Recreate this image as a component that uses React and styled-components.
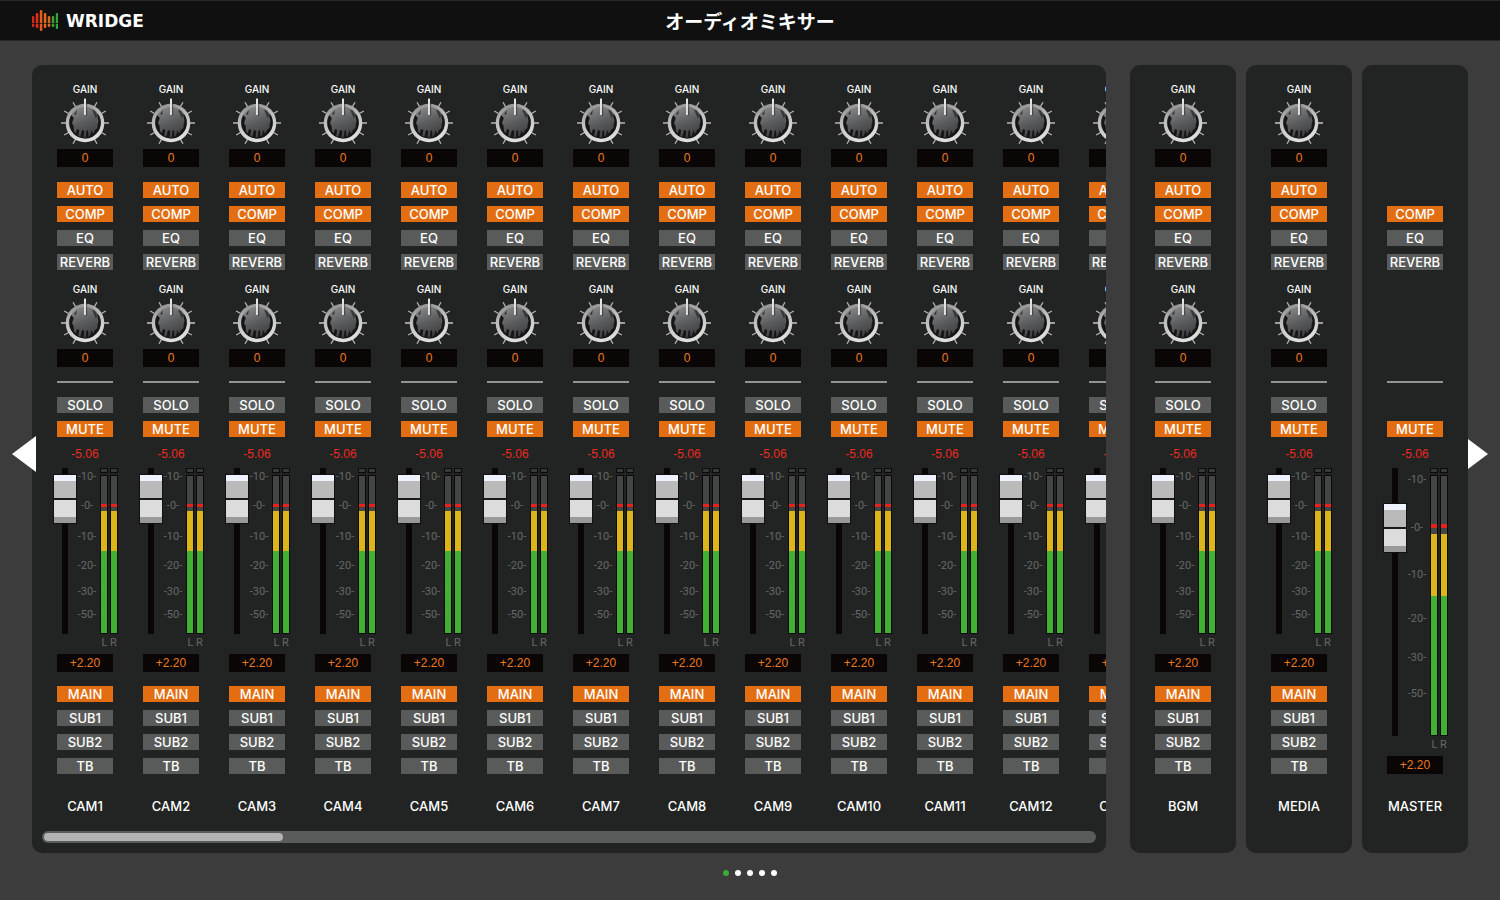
import React, { useState } from "react";
import styled, { createGlobalStyle } from "styled-components";

const GlobalStyle = createGlobalStyle`
  * {
    box-sizing: border-box;
  }
  body {
    margin: 0;
    background-color: #3b3c3b;
    color: #fff;
    font-family: Inter, "Liberation Sans", "Noto Sans CJK JP", sans-serif;
  }
`;

const Page = styled.div`
  min-height: 100vh;
  display: flex;
  flex-direction: column;
`;

const Header = styled.header`
  display: grid;
  grid-template-columns: 1fr auto 1fr;
  align-items: center;
  height: 41px;
  padding: 0 32px;
  background-color: #101010;
  border-top: 1px solid #262727;
  border-bottom: 1px solid #262727;
`;

const Logo = styled.a`
  display: flex;
  align-items: center;
  gap: 8px;
  color: #fff;
  font-family: "DejaVu Sans", sans-serif;
  font-size: 17px;
  font-weight: 700;
  line-height: 20px;
  text-decoration: none;
`;

const Title = styled.h1`
  margin: 0;
  font-family: "Noto Sans CJK JP", sans-serif;
  font-size: 19px;
  font-weight: 700;
  line-height: 24px;
`;

const Main = styled.main`
  display: flex;
  padding-top: 24px;
`;

const ArrowColumn = styled.div`
  position: relative;
  z-index: 1;
  flex: 0 0 32px;
  min-width: 0;
  display: flex;
  align-items: center;
  padding-bottom: 10px;
  padding-left: ${({ $side }) => ($side === "left" ? "12px" : "0")};
`;

const ArrowButton = styled.button`
  flex: none;
  display: block;
  padding: 0;
  border: none;
  background: none;
  cursor: pointer;

  svg {
    display: block;
  }
`;

const ScrollPanel = styled.section`
  flex: 1;
  min-width: 0;
  padding: 16px 0 10px 10px;
  border-radius: 10px;
  background-color: #222423;
  overflow: hidden;
`;

const Strips = styled.div`
  display: flex;
`;

const ScrollTrack = styled.div`
  height: 12px;
  margin: 17px 10px 0 0;
  padding: 2px;
  border-radius: 6px;
  background-color: #5a5b5b;
`;

const ScrollThumb = styled.div`
  height: 8px;
  border-radius: 4px;
  background-color: #b3b3b3;
`;

const FixedPanels = styled.div`
  display: flex;
  gap: 10px;
  margin-left: 24px;
`;

const Panel = styled.section`
  display: flex;
  padding: 16px 10px 39px;
  border-radius: 10px;
  background-color: #222423;
`;

const StripColumn = styled.div`
  flex: 0 0 86px;
  display: flex;
  flex-direction: column;
  align-items: center;
`;

const GainSlot = styled.div`
  display: flex;
  flex-direction: column;
  align-items: center;
  height: 86px;
  margin-top: ${({ $top }) => $top || 0}px;
`;

const GainLabel = styled.span`
  font-size: 10px;
  font-weight: 500;
  line-height: 16px;
`;

const Dial = styled.label`
  position: relative;
  display: block;
  width: 52px;
  height: 52px;

  svg {
    display: block;
  }
`;

const DialInput = styled.input`
  position: absolute;
  inset: 0;
  width: 100%;
  height: 100%;
  margin: 0;
  opacity: 0;
  cursor: pointer;
`;

const Value = styled.output`
  flex: none;
  width: 56px;
  height: 18px;
  background-color: #0a0606;
  color: #f07a1e;
  font-family: "Liberation Sans", sans-serif;
  font-size: 12px;
  line-height: 18px;
  text-align: center;
`;

const ButtonGroup = styled.div`
  display: flex;
  flex-direction: column;
  justify-content: flex-end;
  gap: 8px;
  min-height: ${({ $rows }) => $rows * 24 - 8}px;
  margin-top: ${({ $top }) => $top}px;
`;

const Toggle = styled.button`
  display: block;
  width: 56px;
  height: 16px;
  padding: 0;
  border: none;
  background-color: ${({ $on }) => ($on ? "#e36e12" : "#595b5a")};
  color: #fff;
  font-family: inherit;
  font-size: 13px;
  font-weight: 500;
  line-height: 16px;
  text-align: center;
  cursor: pointer;
`;

const Hr = styled.hr`
  width: 56px;
  height: 2px;
  margin: 14px 0 0;
  border: none;
  background-color: #929392;
`;

const Peak = styled.span`
  margin: 9px 0 6px;
  color: #ee2a20;
  font-family: "Liberation Sans", sans-serif;
  font-size: 12px;
  line-height: 16px;
`;

const FaderRow = styled.div`
  display: flex;
  width: 86px;
  height: ${({ $tall }) => ($tall ? 268 : 166)}px;
  padding: 0 10px 0 11px;
`;

const Fader = styled.input`
  appearance: none;
  writing-mode: vertical-lr;
  direction: rtl;
  width: 24px;
  height: 100%;
  margin: 0;
  background: linear-gradient(#0a0606, #0a0606) center / 6px 100% no-repeat;
  cursor: pointer;

  &::-webkit-slider-thumb {
    appearance: none;
    width: 24px;
    height: 50px;
    border: 1px solid #111;
    background: linear-gradient(
      #edf2fd 0 6px,
      #bababa 6px 23px,
      #191919 23px 25px,
      #dcdcdc 25px 42px,
      #999 42px
    );
  }
`;

const Scale = styled.div`
  display: grid;
  grid-template-rows: ${({ $tall }) =>
    $tall ? "48px 47px 44px 39px 36px 12px" : "29px 31px 29px 26px 23px 12px"};
  width: 20px;
  padding-top: ${({ $tall }) => ($tall ? 6 : 3)}px;
  color: #666867;
  font-family: Roboto, sans-serif;
  font-size: 11px;
  line-height: 12px;
  text-align: center;
`;

const Meters = styled.div`
  display: flex;
  gap: 2px;
  margin-left: 3px;
`;

const Meter = styled.div`
  display: flex;
  flex-direction: column;
  gap: 2px;
  width: 8px;
`;

const ClipLamp = styled.div`
  height: 5px;
  border: 1px solid #0a0a0a;
  background-color: #373838;
`;

const MeterBar = styled.div`
  flex: 1;
  border: 1px solid #0a0a0a;
  background: ${({ $tall }) =>
    $tall
      ? "linear-gradient(#444545 0 48px, #e8211b 48px 52px, #444545 52px 58px, #dbb51a 58px 120px, #42b034 120px)"
      : "linear-gradient(#444545 0 28px, #e8211b 28px 31px, #444545 31px 35px, #dbb51a 35px 75px, #42b034 75px)"};
`;

const Sides = styled.div`
  display: flex;
  align-self: flex-end;
  width: 18px;
  margin-right: 10px;
  padding-top: 1px;
  margin-bottom: 3px;
  color: #666867;
  font-family: Roboto, sans-serif;
  font-size: 11px;
  line-height: 16px;

  span {
    flex: 1;
    text-align: center;
  }
`;

const Name = styled.h2`
  margin: auto 0 0;
  padding-top: ${({ $master }) => ($master ? 16 : 24)}px;
  font-size: 13px;
  font-weight: 500;
  line-height: 16px;
`;

const Pager = styled.nav`
  display: flex;
  justify-content: center;
  gap: 6px;
  padding: 17px 0;
`;

const Dot = styled.button`
  width: 6px;
  height: 6px;
  padding: 0;
  border: none;
  border-radius: 50%;
  background-color: ${({ $active }) => ($active ? "#3aaa35" : "#fff")};
  cursor: pointer;
`;

// x, top, bottom and colour of every bar in the logo
const logoBars = [
  [0, 6, 17, "#d3261c"],
  [4, 3, 18, "#dd331b"],
  [8, 0, 21, "#ea5b1b"],
  [12, 3, 18, "#e8641b"],
  [16, 6, 17, "#d06a1f"],
  [20, 6, 17, "#3f9e36"],
  [24, 3, 19, "#2fa63a"],
];

const LogoMark = () => (
  <svg width="26" height="22" viewBox="0 0 26 22" aria-hidden="true">
    {logoBars.map(([x, top, bottom, color]) => (
      <rect key={x} x={x - 0.2} y={top} width="2.5" height={bottom - top} rx="1" fill={color} />
    ))}
    <path d="M0 13.5H26" stroke="#101010" strokeWidth="0.7" />
  </svg>
);

const tickAngles = [-150, -120, -90, -60, -30, 0, 30, 60, 90, 120, 150];

const KnobDefs = () => (
  <svg width="0" height="0" style={{ display: "block" }} aria-hidden="true">
    <defs>
      <linearGradient id="ring" x1="0" y1="0" x2="0.3" y2="1">
        <stop offset="0" stopColor="#858686" />
        <stop offset="0.45" stopColor="#bcbcbc" />
        <stop offset="1" stopColor="#dededd" />
      </linearGradient>
      <linearGradient id="cap" x1="0.2" y1="0" x2="0.6" y2="1">
        <stop offset="0" stopColor="#8a8b8b" />
        <stop offset="0.5" stopColor="#5c5d5e" />
        <stop offset="1" stopColor="#3c3d3e" />
      </linearGradient>
    </defs>
  </svg>
);

const Knob = () => (
  <svg width="52" height="52" viewBox="0 0 52 52" aria-hidden="true">
    {tickAngles.map((angle) => (
      <path
        key={angle}
        d="M26 2V8"
        stroke="#b4b5b5"
        strokeWidth={angle % 90 === 0 ? 1.7 : 1.3}
        transform={`rotate(${angle} 26 26)`}
      />
    ))}
    <circle cx="26" cy="26" r="19.3" fill="url(#ring)" />
    <circle cx="26" cy="25.6" r="15.8" fill="url(#cap)" />
    <path
      d="M12.2 18A15.8 15.8 0 1 0 40 18.5L38 17 39.5 24 38.6 28 38.5 31 36 33 34 37 32.5 33 31 38.5 29.5 40 29 33 27.4 34 26.8 40.5 24.6 40.5 25.3 34 23 33 21.4 39.8 19.2 39 20.2 33 18 32 16.6 36.5 15 34 14.6 29 13 26 14.8 21z"
      fill="#161617"
    />
    <path d="M33 13l3 1 2 4 -1 4 -2-5z M15 17l3-4 -1 5z" fill="#333435" />
    <path d="M27.2 6V18.5" stroke="#222" strokeWidth="2" opacity="0.5" />
    <path d="M26 1.5V18" stroke="#f2f2f2" strokeWidth="1.7" />
  </svg>
);

const Gain = ({ label }) => {
  const [gain, setGain] = useState(0);

  return (
    <>
      <GainLabel>GAIN</GainLabel>
      <Dial>
        <Knob />
        <DialInput
          type="range"
          min="-20"
          max="20"
          value={gain}
          aria-label={label}
          onChange={(e) => setGain(Number(e.target.value))}
        />
      </Dial>
      <Value>{gain}</Value>
    </>
  );
};

const ToggleButton = ({ children, defaultOn }) => {
  const [on, setOn] = useState(Boolean(defaultOn));

  return (
    <Toggle type="button" $on={on} aria-pressed={on} onClick={() => setOn(!on)}>
      {children}
    </Toggle>
  );
};

const LevelMeter = ({ tall }) => (
  <Meter>
    <ClipLamp />
    <MeterBar $tall={tall} />
  </Meter>
);

// the master strip has no gains and no routing, and a longer fader instead
const Strip = ({ name, master }) => (
  <StripColumn>
    <GainSlot>{!master && <Gain label={`${name} input gain`} />}</GainSlot>
    <ButtonGroup $rows={4} $top={15}>
      {!master && <ToggleButton defaultOn>AUTO</ToggleButton>}
      <ToggleButton defaultOn>COMP</ToggleButton>
      <ToggleButton>EQ</ToggleButton>
      <ToggleButton>REVERB</ToggleButton>
    </ButtonGroup>
    <GainSlot $top={11}>{!master && <Gain label={`${name} output gain`} />}</GainSlot>
    <Hr />
    <ButtonGroup $rows={2} $top={14}>
      {!master && <ToggleButton>SOLO</ToggleButton>}
      <ToggleButton defaultOn>MUTE</ToggleButton>
    </ButtonGroup>
    <Peak>-5.06</Peak>
    <FaderRow $tall={master}>
      <Fader
        type="range"
        min="0"
        max="100"
        defaultValue={master ? 84 : 95}
        aria-label={`${name} level`}
      />
      <Scale $tall={master}>
        <span>-10-</span>
        <span>-0-</span>
        <span>-10-</span>
        <span>-20-</span>
        <span>-30-</span>
        <span>-50-</span>
      </Scale>
      <Meters>
        <LevelMeter tall={master} />
        <LevelMeter tall={master} />
      </Meters>
    </FaderRow>
    <Sides>
      <span>L</span>
      <span>R</span>
    </Sides>
    <Value>+2.20</Value>
    {!master && (
      <ButtonGroup $rows={4} $top={14}>
        <ToggleButton defaultOn>MAIN</ToggleButton>
        <ToggleButton>SUB1</ToggleButton>
        <ToggleButton>SUB2</ToggleButton>
        <ToggleButton>TB</ToggleButton>
      </ButtonGroup>
    )}
    <Name $master={master}>{name}</Name>
  </StripColumn>
);

// the first camera comes round again after the last one
const cams = [...Array.from({ length: 12 }, (_, i) => `CAM${i + 1}`), "CAM1"];
const pages = [0, 1, 2, 3, 4];

const App = () => {
  const [page, setPage] = useState(0);

  return (
    <Page>
      <GlobalStyle />
      <KnobDefs />
      <Header>
        <Logo href="#">
          <LogoMark />
          WRIDGE
        </Logo>
        <Title>オーディオミキサー</Title>
      </Header>
      <Main>
        <ArrowColumn $side="left">
          <ArrowButton
            type="button"
            aria-label="Previous"
            onClick={() => setPage(Math.max(page - 1, 0))}
          >
            <svg width="24" height="36" viewBox="0 0 24 36">
              <path d="M24 0V36L0 18z" fill="#fff" />
            </svg>
          </ArrowButton>
        </ArrowColumn>
        <ScrollPanel>
          <Strips>
            {cams.map((cam, i) => (
              <Strip key={i} name={cam} />
            ))}
          </Strips>
          <ScrollTrack>
            <ScrollThumb style={{ width: `${(3 / 13.2) * 100}%` }} />
          </ScrollTrack>
        </ScrollPanel>
        <FixedPanels>
          <Panel>
            <Strip name="BGM" />
          </Panel>
          <Panel>
            <Strip name="MEDIA" />
          </Panel>
          <Panel>
            <Strip name="MASTER" master />
          </Panel>
        </FixedPanels>
        <ArrowColumn $side="right">
          <ArrowButton
            type="button"
            aria-label="Next"
            onClick={() => setPage(Math.min(page + 1, pages.length - 1))}
          >
            <svg width="20" height="30" viewBox="0 0 20 30">
              <path d="M0 0V30L20 15z" fill="#fff" />
            </svg>
          </ArrowButton>
        </ArrowColumn>
      </Main>
      <Pager aria-label="Pages">
        {pages.map((p) => (
          <Dot
            key={p}
            type="button"
            aria-label={`Page ${p + 1}`}
            $active={p === page}
            onClick={() => setPage(p)}
          />
        ))}
      </Pager>
    </Page>
  );
};

export default App;
